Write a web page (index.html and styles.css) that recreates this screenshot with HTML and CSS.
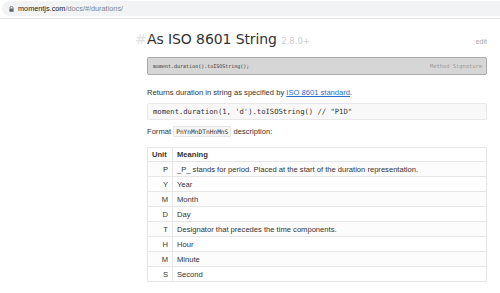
FILE: index.html
```html
<!DOCTYPE html>
<html lang="en">
<head>
<meta charset="UTF-8" />
<title>Moment.js | Docs</title>
<link rel="stylesheet" href="styles.css">
</head>
<body>
<div class="urlbar">
  <div class="field">
    <svg class="lock" width="5" height="6" viewBox="0 0 5 6"><path d="M1 2.6V1.8a1.5 1.5 0 0 1 3 0v0.8" fill="none" stroke="#5f6368" stroke-width="0.8"/><rect x="0.4" y="2.6" width="4.2" height="3.2" rx="0.5" fill="#5f6368"/></svg>
    <span class="host">momentjs.com</span><span class="path">/docs/#/durations/</span>
  </div>
</div>

<div class="docs">
  <div class="heading">
    <h2><span class="hash">#</span>As ISO 8601 String <span class="version">2.8.0+</span></h2>
    <a class="edit">edit</a>
  </div>

  <div class="signature">
    <code>moment.duration().toISOString();</code>
    <span class="sig-label">Method Signature</span>
  </div>

  <p class="intro">Returns duration in string as specified by <a class="link">ISO 8601 standard</a>.</p>

  <pre class="example">moment.duration(1, 'd').toISOString() // "P1D"</pre>

  <p class="format">Format <code class="inline">PnYnMnDTnHnMnS</code> description:</p>

  <table class="units">
    <thead>
      <tr><th>Unit</th><th>Meaning</th></tr>
    </thead>
    <tbody>
      <tr><td>P</td><td>_P_ stands for period. Placed at the start of the duration representation.</td></tr>
      <tr><td>Y</td><td>Year</td></tr>
      <tr><td>M</td><td>Month</td></tr>
      <tr><td>D</td><td>Day</td></tr>
      <tr><td>T</td><td>Designator that precedes the time components.</td></tr>
      <tr><td>H</td><td>Hour</td></tr>
      <tr><td>M</td><td>Minute</td></tr>
      <tr><td>S</td><td>Second</td></tr>
    </tbody>
  </table>
</div>
</body>
</html>
```

FILE: styles.css
```css
body {
  margin: 0; padding: 0; background: #fff; color: #333;
  font-family: "Liberation Sans", Arial, sans-serif;
  font-size: 7.6px;
}

/* barra de direccion */
.urlbar {
  height: 19px;
  border-bottom: 1px solid #e3e3e3;
  padding-top: 1px;
  box-sizing: border-box;
}
.field {
  height: 15px; margin-left: 2px;
  background: #f1f3f4; border-radius: 8px 0 0 8px;
  display: flex; align-items: center;
  padding-left: 7px;
  font-size: 7.3px;
}
.lock { margin-right: 4px; }
.host { color: #202124; }
.path { color: #80868b; }

.docs {
  width: 340px;
  margin-left: 147px;
}

.heading {
  display: flex; justify-content: space-between; align-items: baseline;
  margin-top: 12px;
}
h2 {
  margin: 0; position: relative;
  font-family: "DejaVu Sans", sans-serif; font-weight: normal;
  font-size: 14px; line-height: 17px; color: #333;
  letter-spacing: -0.1px;
}
.hash {
  position: absolute; left: -12px; color: #e0e0e0;
}
.version { font-size: 8.5px; color: #ccc; letter-spacing: 0; }
.edit { font-size: 7px; color: #aaa; }

.signature {
  margin-top: 7px;
  height: 18px; box-sizing: border-box;
  background: #d6d6d6; border: 1px solid #aaa; border-radius: 2px;
  display: flex; justify-content: space-between; align-items: center;
  padding: 0 4px 0 5px;
  font-family: "DejaVu Sans Mono", monospace;
}
.signature code { font-size: 5px; color: #333; }
.sig-label { font-size: 5.4px; color: #999; }

p { margin: 0; line-height: 10px; }
.intro { margin-top: 13px; }
.link { color: #2a6bd1; text-decoration: underline; }

.example {
  margin: 5px 0 0;
  height: 17px; box-sizing: border-box;
  background: #f8f8f8; border: 1px solid #e8e8e8; border-radius: 2px;
  padding: 0 5px; line-height: 15px;
  font-family: "DejaVu Sans Mono", monospace; font-size: 7.2px; color: #333;
}

.format { margin-top: 7px; }
.inline {
  font-family: "DejaVu Sans Mono", monospace; font-size: 6.2px;
  background: #f5f5f5; border: 1px solid #e6e6e6; border-radius: 1px;
  padding: 1px 2px;
}

.units {
  margin-top: 10px; width: 100%;
  border-collapse: collapse; border: 1px solid #e6e6e6;
}
.units th, .units td {
  border: 1px solid #e6e6e6;
  height: 14px; padding: 0 4px;
  text-align: left; color: #333;
}
.units th { font-weight: bold; height: 13px; }
.units td:first-child { text-align: right; width: 16px; }
.units tbody tr:nth-child(odd) { background: #fcfcfc; }
```
